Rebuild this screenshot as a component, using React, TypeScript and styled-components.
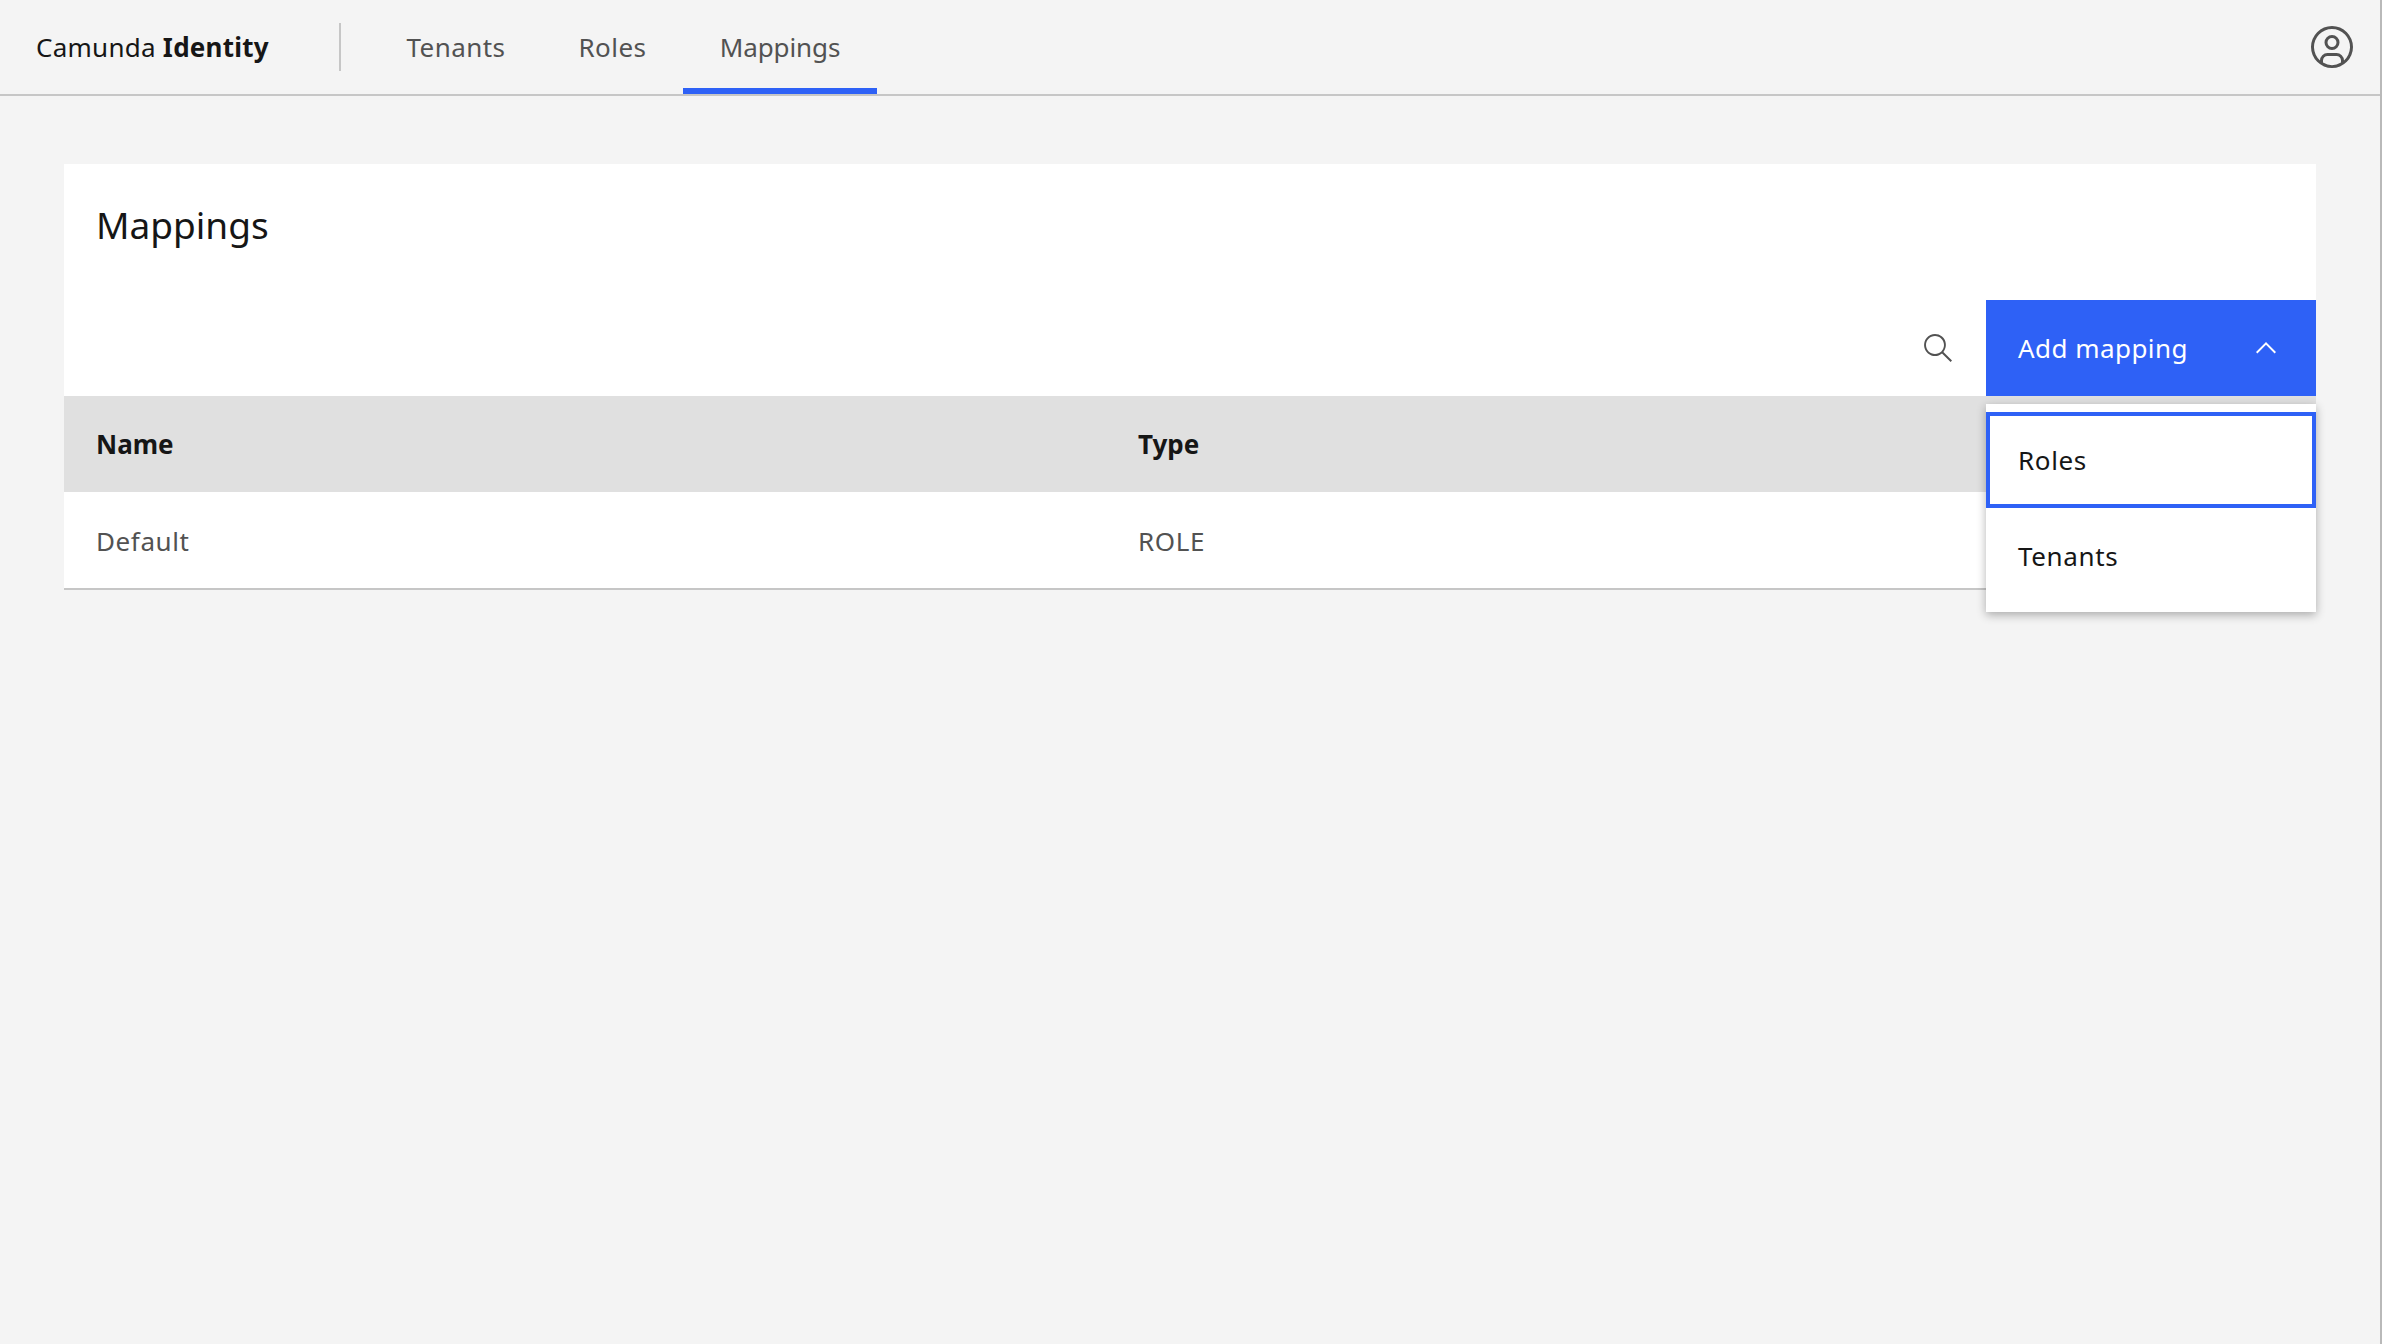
import React from "react";
import styled, { createGlobalStyle } from "styled-components";

const Global = createGlobalStyle`
  html, body { margin: 0; padding: 0; background: #f4f4f4; }
  * { box-sizing: border-box; }
`;

const Page = styled.div`
  position: relative;
  width: 2382px;
  height: 1344px;
  overflow: hidden;
  background: #f4f4f4;
  border-right: 2px solid #b9b9b9;
  font-family: "Noto Sans", "Open Sans", sans-serif;
  font-size: 26px;
  letter-spacing: 0.45px;
  color: #161616;
`;

const ScrollMark = styled.div`
  position: absolute;
  right: -2px;
  top: 667px;
  width: 1px;
  height: 3px;
  background: #4d5a70;
`;

const Header = styled.header`
  display: flex;
  align-items: stretch;
  height: 96px;
  border-bottom: 2px solid #c6c6c6;
`;

const Brand = styled.div`
  display: flex;
  align-items: center;
  gap: 7px;
  width: 339px;
  padding-left: 36px;
  letter-spacing: 0.25px;
  strong { font-weight: 700; }
`;

const Divider = styled.div`
  width: 2px;
  height: 48px;
  margin-top: 23px;
  background: #c6c6c6;
`;

const Nav = styled.nav`
  display: grid;
  grid-template-columns: 172px 141px 194px;
  margin-left: 29px;
  flex: 1;
`;

const Tab = styled.a<{ $active?: boolean }>`
  display: flex;
  align-items: center;
  justify-content: center;
  padding-top: 6px;
  color: #525252;
  letter-spacing: ${(p) => (p.$active ? "-0.1px" : "0.45px")};
  border-bottom: 6px solid ${(p) => (p.$active ? "#2e61f6" : "transparent")};
`;

const UserButton = styled.div`
  display: flex;
  align-items: center;
  justify-content: center;
  width: 96px;
  color: #525252;
`;

const Main = styled.main`
  padding: 68px 64px 0;
`;

const Card = styled.section`
  position: relative;
  background: #fff;
  border-bottom: 2px solid #c6c6c6;
`;

const Title = styled.h1`
  margin: 0;
  height: 136px;
  padding: 41px 32px 0;
  font-size: 37px;
  font-weight: 400;
  line-height: 40px;
  letter-spacing: 0;
`;

const Toolbar = styled.div`
  display: flex;
  justify-content: flex-end;
  align-items: stretch;
  height: 96px;
`;

const SearchButton = styled.div`
  display: flex;
  align-items: center;
  justify-content: center;
  width: 96px;
  color: #525252;
`;

const PrimaryButton = styled.div`
  display: flex;
  align-items: center;
  justify-content: space-between;
  width: 330px;
  padding: 0 34px 0 32px;
  background: #2e61f6;
  color: #fff;
`;

const Row = styled.div<{ $head?: boolean }>`
  display: grid;
  grid-template-columns: 1042px 1fr;
  align-items: center;
  height: 96px;
  padding: ${(p) => (p.$head ? "0" : "2px")} 0 0 32px;
  background: ${(p) => (p.$head ? "#e0e0e0" : "#fff")};
  color: ${(p) => (p.$head ? "#161616" : "#525252")};
  font-weight: ${(p) => (p.$head ? 700 : 400)};
  letter-spacing: ${(p) => (p.$head ? "0" : "0.6px")};
`;

const Menu = styled.div`
  position: absolute;
  right: 0;
  top: 240px;
  width: 330px;
  padding: 8px 0;
  background: #fff;
  letter-spacing: 0.65px;
  box-shadow: 0 3px 9px rgba(0, 0, 0, 0.3);
`;

const MenuItem = styled.div<{ $focused?: boolean }>`
  display: flex;
  align-items: center;
  height: 96px;
  padding-left: ${(p) => (p.$focused ? "28px" : "32px")};
  border: ${(p) => (p.$focused ? "4px solid #2e61f6" : "none")};
`;

const Icon = styled.svg`
  display: block;
  fill: currentColor;
`;

export default function App() {
  return (
    <Page>
      <Global />
      <Header>
        <Brand>
          <span>Camunda</span>
          <strong>Identity</strong>
        </Brand>
        <Divider />
        <Nav>
          <Tab>Tenants</Tab>
          <Tab>Roles</Tab>
          <Tab $active>Mappings</Tab>
        </Nav>
        <UserButton>
          <Icon width="48" height="48" viewBox="0 0 32 32">
            <path d="M16,8a5,5,0,1,0,5,5A5,5,0,0,0,16,8Zm0,8a3,3,0,1,1,3-3A3.0034,3.0034,0,0,1,16,16Z" />
            <path d="M16,2A14,14,0,1,0,30,16,14.0158,14.0158,0,0,0,16,2ZM10,26.3765V25a3.0033,3.0033,0,0,1,3-3h6a3.0033,3.0033,0,0,1,3,3v1.3765a11.8989,11.8989,0,0,1-12,0Zm13.9925-1.4507A5.0016,5.0016,0,0,0,19,20H13a5.0016,5.0016,0,0,0-4.9925,4.9258,12,12,0,1,1,15.985,0Z" />
          </Icon>
        </UserButton>
      </Header>
      <Main>
        <Card>
          <Title>Mappings</Title>
          <Toolbar>
            <SearchButton>
              <Icon width="32" height="32" viewBox="0 0 16 16">
                <path d="M15,14.3L10.7,10c1.9-2.3,1.6-5.8-0.7-7.7S4.2,0.7,2.3,3S0.7,8.8,3,10.7c2,1.7,5,1.7,7,0l4.3,4.3L15,14.3z M2,6.5C2,4,4,2,6.5,2S11,4,11,6.5S9,11,6.5,11S2,9,2,6.5z" />
              </Icon>
            </SearchButton>
            <PrimaryButton>
              <span>Add mapping</span>
              <Icon width="32" height="32" viewBox="0 0 16 16">
                <path d="M8 5L13 10 12.3 10.7 8 6.4 3.7 10.7 3 10z" />
              </Icon>
            </PrimaryButton>
          </Toolbar>
          <Row $head>
            <span>Name</span>
            <span>Type</span>
          </Row>
          <Row>
            <span>Default</span>
            <span>ROLE</span>
          </Row>
          <Menu>
            <MenuItem $focused>Roles</MenuItem>
            <MenuItem>Tenants</MenuItem>
          </Menu>
        </Card>
      </Main>
      <ScrollMark />
    </Page>
  );
}
